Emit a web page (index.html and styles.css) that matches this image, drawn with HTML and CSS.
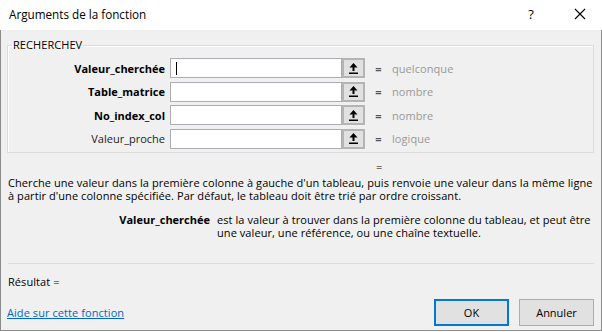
FILE: index.html
```html
<!DOCTYPE html>
<html lang="fr">
<head>
    <meta charset="UTF-8">
    <title>Arguments de la fonction</title>
    <link rel="stylesheet" href="styles.css">
</head>
<body>
    <div class="dialog">
        <div class="titlebar">
            <span class="title">Arguments de la fonction</span>
            <span class="help">?</span>
            <svg class="close" width="12" height="12" viewBox="0 0 12 12">
                <path d="M1 1 L11 11 M11 1 L1 11" stroke="#000" stroke-width="1.1" fill="none"/>
            </svg>
        </div>

        <div class="content">
            <fieldset class="group">
                <legend>RECHERCHEV</legend>
                <div class="args">
                    <label class="arg-name strong">Valeur_cherchée</label>
                    <div class="field"><span class="caret"></span></div>
                    <button class="pick"><svg width="9" height="11" viewBox="0 0 9 11"><path d="M4.5 0 L8.5 4.5 L5.5 4.5 L5.5 8 L3.5 8 L3.5 4.5 L0.5 4.5 Z M0 9.5 H9 V11 H0 Z" fill="#000"/></svg></button>
                    <span class="eq">=</span>
                    <span class="type">quelconque</span>

                    <label class="arg-name strong">Table_matrice</label>
                    <div class="field"></div>
                    <button class="pick"><svg width="9" height="11" viewBox="0 0 9 11"><path d="M4.5 0 L8.5 4.5 L5.5 4.5 L5.5 8 L3.5 8 L3.5 4.5 L0.5 4.5 Z M0 9.5 H9 V11 H0 Z" fill="#000"/></svg></button>
                    <span class="eq">=</span>
                    <span class="type">nombre</span>

                    <label class="arg-name strong">No_index_col</label>
                    <div class="field"></div>
                    <button class="pick"><svg width="9" height="11" viewBox="0 0 9 11"><path d="M4.5 0 L8.5 4.5 L5.5 4.5 L5.5 8 L3.5 8 L3.5 4.5 L0.5 4.5 Z M0 9.5 H9 V11 H0 Z" fill="#000"/></svg></button>
                    <span class="eq">=</span>
                    <span class="type">nombre</span>

                    <label class="arg-name">Valeur_proche</label>
                    <div class="field"></div>
                    <button class="pick"><svg width="9" height="11" viewBox="0 0 9 11"><path d="M4.5 0 L8.5 4.5 L5.5 4.5 L5.5 8 L3.5 8 L3.5 4.5 L0.5 4.5 Z M0 9.5 H9 V11 H0 Z" fill="#000"/></svg></button>
                    <span class="eq">=</span>
                    <span class="type">logique</span>
                </div>
            </fieldset>

            <div class="result-eq">=</div>

            <p class="desc">Cherche une valeur dans la première colonne à gauche d'un tableau, puis renvoie une valeur dans la même ligne à partir d'une colonne spécifiée. Par défaut, le tableau doit être trié par ordre croissant.</p>

            <div class="arg-help">
                <span class="arg-help-name">Valeur_cherchée</span>
                <span class="arg-help-text">est la valeur à trouver dans la première colonne du tableau, et peut être une valeur, une référence, ou une chaîne textuelle.</span>
            </div>

            <div class="separator"></div>

            <div class="result">Résultat =</div>

            <div class="footer">
                <a href="#" class="help-link">Aide sur cette fonction</a>
                <div class="buttons">
                    <button class="btn btn-default">OK</button>
                    <button class="btn">Annuler</button>
                </div>
            </div>
        </div>
    </div>
</body>
</html>
```

FILE: styles.css
```css
body {
    margin: 0;
    background-color: #ffffff;
    font-family: 'Open Sans', 'Noto Sans', sans-serif;
    font-size: 11px;
    letter-spacing: 0.07px;
    color: #000;
}

.dialog {
    width: 602px;
    height: 331px;
    box-sizing: border-box;
    background-color: #f0f0f0;
    border: 1px solid #8c8c8c;
    border-top: none;
}

/* barre de titre */
.titlebar {
    height: 30px;
    background-color: #fff;
    display: flex;
    align-items: center;
    margin: 0 -1px;
    padding: 0 0 0 9px;
}

.title {
    font-size: 11.7px;
    letter-spacing: 0;
    flex: 1;
    padding-bottom: 2px;
}

.help {
    font-size: 13px;
    margin-right: 40px;
    padding-bottom: 2px;
}

.close {
    margin-right: 16px;
    margin-bottom: 2px;
}

.content {
    padding: 0 7px 0 6px;
}

/* cadre RECHERCHEV */
.group {
    margin: 8px 0 0 0;
    padding: 0 0 3px 0;
    border: 1px solid #dcdcdc;
    box-shadow: inset 1px 1px 0 #fff;
}

.group legend {
    margin-left: 4px;
    padding: 0 1px;
    line-height: 14px;
}

.args {
    display: grid;
    grid-template-columns: 162px 172px 23px 27px 1fr;
    grid-auto-rows: 20px;
    row-gap: 3.5px;
    margin-top: 6px;
    align-items: center;
}

.arg-name {
    text-align: right;
    padding-right: 5px;
    color: #222;
    letter-spacing: 0;
}

.arg-name.strong {
    font-weight: bold;
    color: #000;
}

.field {
    height: 20px;
    box-sizing: border-box;
    background-color: #fff;
    border: 1px solid #abadb3;
    position: relative;
}

.caret {
    position: absolute;
    left: 5px;
    top: 3px;
    width: 1px;
    height: 13px;
    background-color: #000;
}

.pick {
    height: 20px;
    width: 23px;
    margin: 0;
    padding: 0;
    box-sizing: border-box;
    background-color: #e1e1e1;
    border: 2px solid #b4b4b4;
    display: flex;
    align-items: center;
    justify-content: center;
}

.eq {
    text-align: center;
    color: #555;
    font-weight: bold;
}

.type {
    color: #999;
}

.result-eq {
    padding-left: 369px;
    line-height: 14px;
    margin-top: 7px;
}

.desc {
    margin: 2px 0 0 1px;
    line-height: 13px;
}

.arg-help {
    display: grid;
    grid-template-columns: 203px 1fr;
    column-gap: 7px;
    margin-top: 11px;
    line-height: 13px;
}

.arg-help-name {
    font-weight: bold;
    text-align: right;
    letter-spacing: 0;
}

.separator {
    height: 1px;
    background-color: #dcdcdc;
    margin: 24px 0 0 1px;
}

.result {
    margin: 11px 0 0 1px;
    line-height: 14px;
}

.footer {
    display: flex;
    align-items: center;
    justify-content: space-between;
    margin-top: 10px;
}

.help-link {
    color: #0066cc;
    text-decoration: underline;
}

.buttons {
    display: flex;
    gap: 10px;
}

.btn {
    width: 75px;
    height: 27px;
    font-family: inherit;
    font-size: 11px;
    background-color: #e1e1e1;
    border: 1px solid #adadad;
    padding: 0;
}

.btn-default {
    border: 2px solid #0078d7;
}
```
